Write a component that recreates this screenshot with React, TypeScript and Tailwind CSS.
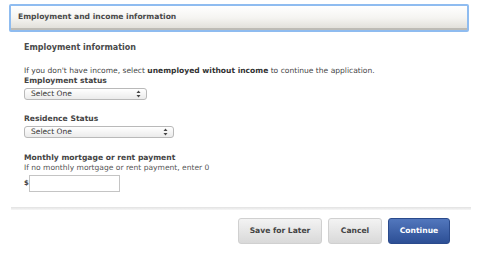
import React from 'react';

const SelectBox = ({ width }: { width: string }) => (
    <div
        className={`${width} h-[12px] flex items-center justify-between pl-[6px] pr-[5px] rounded-[3px] border border-[#b9b9b9] bg-gradient-to-b from-white to-[#ebebeb] text-[7.5px] leading-none text-[#333]`}
    >
        <span>Select One</span>
        <svg width="5" height="8" viewBox="0 0 5 8">
            <path d="M2.5 0.5 L4.5 3 L0.5 3 Z" fill="#444" />
            <path d="M2.5 7.5 L4.5 5 L0.5 5 Z" fill="#444" />
        </svg>
    </div>
);

const App = () => {
    return (
        <div
            className="w-[478px] h-[253px] bg-white pt-[4px] px-[9px] text-[#444]"
            style={{ fontFamily: '"DejaVu Sans", Verdana, sans-serif' }}
        >
            {/* Section header */}
            <div className="h-[28px] rounded-[2px] border-2 border-[#8fbcf0] bg-gradient-to-b from-white via-[#f5f4f1] to-[#dedcd6] flex flex-col">
                <div className="flex-1 flex items-center pl-[7px] text-[7.6px] font-bold text-[#4a4a4a]">
                    Employment and income information
                </div>
                <div className="h-[2px] bg-[#bdbbb5]" />
            </div>

            {/* Form body */}
            <div className="pl-[15px] pt-[10px]">
                <div className="h-[12px] flex items-center text-[8px] font-bold text-[#4a4a4a]">
                    Employment information
                </div>

                <div className="mt-[12px] h-[10px] flex items-center text-[7.55px] text-[#444]">
                    <span>
                        If you don't have income, select <b className="text-[#333]">unemployed without income</b> to continue the application.
                    </span>
                </div>
                <div className="h-[9px] flex items-center text-[7.6px] font-bold text-[#444]">Employment status</div>
                <div className="mt-[3px]">
                    <SelectBox width="w-[123px]" />
                </div>

                <div className="mt-[13px] h-[11px] flex items-center text-[7.6px] font-bold text-[#444]">Residence Status</div>
                <div className="mt-[2px]">
                    <SelectBox width="w-[150px]" />
                </div>

                <div className="mt-[15px] h-[10px] flex items-center text-[7.6px] font-bold text-[#444]">
                    Monthly mortgage or rent payment
                </div>
                <div className="h-[9px] flex items-center text-[7.55px] text-[#555]">
                    If no monthly mortgage or rent payment, enter 0
                </div>
                <div className="mt-[3px] flex items-center">
                    <span className="text-[7px] font-bold text-[#444]">$</span>
                    <div className="w-[91px] h-[17px] border border-[#c4c4c4] bg-white" />
                </div>
            </div>

            {/* Divider */}
            <div className="mt-[15px] ml-[2px] mr-[-2px] h-[3px] bg-gradient-to-b from-[#e2e2e2] to-[#f6f6f6]" />

            {/* Actions */}
            <div className="mt-[8px] flex justify-end gap-[6px] pr-[19px]">
                <button className="w-[84px] h-[26px] rounded-[3px] border border-[#d0d0d0] bg-gradient-to-b from-[#f3f3f3] to-[#d9d9d9] text-[7.6px] font-bold text-[#444]">
                    Save for Later
                </button>
                <button className="w-[54px] h-[26px] rounded-[3px] border border-[#d0d0d0] bg-gradient-to-b from-[#f3f3f3] to-[#d9d9d9] text-[7.6px] font-bold text-[#444]">
                    Cancel
                </button>
                <button className="w-[62px] h-[26px] rounded-[3px] border border-[#2a4a8c] bg-gradient-to-b from-[#5277bd] to-[#2d4f95] text-[7.6px] font-bold text-white">
                    Continue
                </button>
            </div>
        </div>
    );
};

export default App;
